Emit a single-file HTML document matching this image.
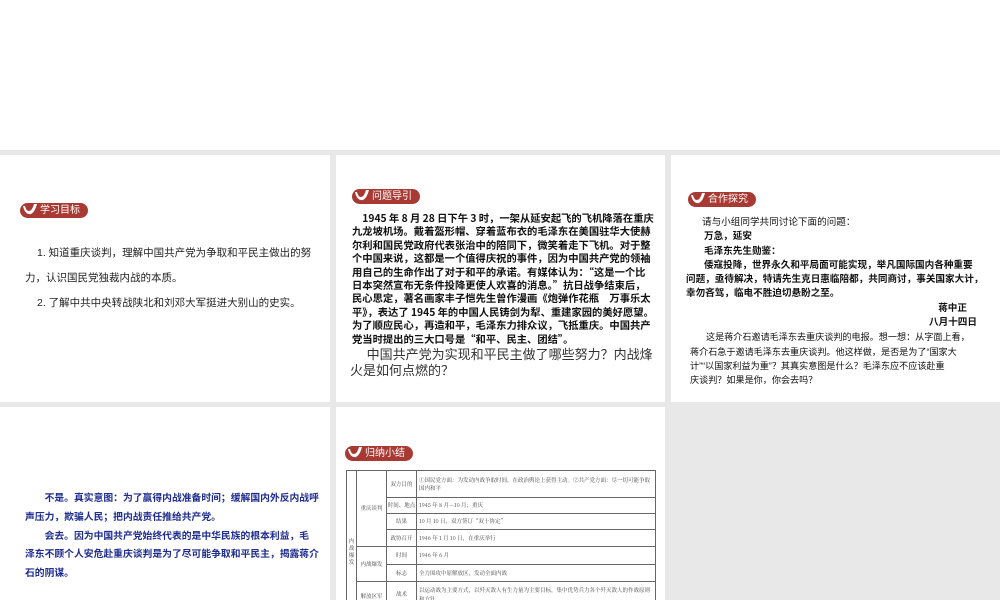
<!DOCTYPE html><html><head><meta charset="utf-8"><style>
html,body{margin:0;width:1000px;height:600px;overflow:hidden}
body{background:#e8e8e8;position:relative;font-family:"Liberation Sans","Noto Sans CJK SC",sans-serif;color:#222}
.p{position:absolute;background:#fff;overflow:hidden}
.b{position:absolute;height:15px;width:68px}
.b .pill{position:absolute;left:0;top:0;width:68px;height:15px;border-radius:8px;background:#a93a33}
.b span{position:absolute;left:20px;top:1px;color:#fff;font-size:10px;line-height:13px}
.t{position:absolute;font-size:10.5px;white-space:nowrap}
.l{white-space:nowrap}
table{border-collapse:collapse;font-family:"Noto Serif CJK SC",serif;font-size:5.5px;color:#444;table-layout:fixed}
td{border:1px solid #666;padding:0 2px;line-height:8.5px;text-align:left;overflow:hidden}
td.c{text-align:center;padding:0 1px}
</style></head><body>
<div class="p" style="left:0;top:0;width:1000px;height:150px"></div>
<div class="p" style="left:0;top:155px;width:330px;height:247px"></div>
<div class="p" style="left:336px;top:155px;width:329px;height:247px"></div>
<div class="p" style="left:671px;top:155px;width:329px;height:247px"></div>
<div class="p" style="left:0;top:407px;width:330px;height:193px"></div>

<svg width="0" height="0" style="position:absolute"><defs><g id="sw"><path d="M3 3 Q5 12 11 11 Q15 9 17 1 L14 1 Q12 8 9 8 Q6 8 5 3Z" fill="#fff"/></g></defs></svg>

<div class="b" style="left:20px;top:203px"><div class="pill"></div><svg style="position:absolute;left:0;top:0" width="20" height="15"><use href="#sw"/></svg><span>学习目标</span></div>
<div class="t" style="left:37px;top:245px">1. 知道重庆谈判，理解中国共产党为争取和平民主做出的努</div>
<div class="t" style="left:25px;top:270px">力，认识国民党独裁内战的本质。</div>
<div class="t" style="left:37px;top:295px">2. 了解中共中央转战陕北和刘邓大军挺进大别山的史实。</div>

<div class="b" style="left:352px;top:189px"><div class="pill"></div><svg style="position:absolute;left:0;top:0" width="20" height="15"><use href="#sw"/></svg><span>问题导引</span></div>
<div style="position:absolute;left:352px;top:211px;width:305px;font-size:10.3px;line-height:13.4px;font-weight:bold;color:#111;font-family:'Noto Sans CJK SC',sans-serif">
<div class="l">　1945 年 8 月 28 日下午 3 时，一架从延安起飞的飞机降落在重庆</div>
<div class="l">九龙坡机场。戴着盔形帽、穿着蓝布衣的毛泽东在美国驻华大使赫</div>
<div class="l">尔利和国民党政府代表张治中的陪同下，微笑着走下飞机。对于整</div>
<div class="l">个中国来说，这都是一个值得庆祝的事件，因为中国共产党的领袖</div>
<div class="l">用自己的生命作出了对于和平的承诺。有媒体认为：“这是一个比</div>
<div class="l">日本突然宣布无条件投降更使人欢喜的消息。”抗日战争结束后，</div>
<div class="l">民心思定，著名画家丰子恺先生曾作漫画《炮弹作花瓶　万事乐太</div>
<div class="l">平》，表达了 1945 年的中国人民铸剑为犁、重建家园的美好愿望。</div>
<div class="l">为了顺应民心，再造和平，毛泽东力排众议，飞抵重庆。中国共产</div>
<div class="l">党当时提出的三大口号是“和平、民主、团结”。</div></div>
<div style="position:absolute;left:350px;top:347px;width:310px;font-size:13px;line-height:16px;color:#333">
<div class="l">　 中国共产党为实现和平民主做了哪些努力？内战烽</div><div class="l">火是如何点燃的？</div></div>

<div class="b" style="left:688px;top:192px"><div class="pill"></div><svg style="position:absolute;left:0;top:0" width="20" height="15"><use href="#sw"/></svg><span>合作探究</span></div>
<div style="position:absolute;left:686px;top:216px;width:305px;font-size:9.6px;line-height:14.3px;color:#111">
<div class="l" style="padding-left:16px">请与小组同学共同讨论下面的问题：</div>
<div style="font-weight:bold">
<div class="l" style="padding-left:18px">万急，延安</div>
<div class="l" style="padding-left:18px">毛泽东先生勋鉴：</div>
<div class="l" style="padding-left:18px">倭寇投降，世界永久和平局面可能实现，举凡国际国内各种重要</div>
<div class="l">问题，亟待解决，特请先生克日惠临陪都，共同商讨，事关国家大计，</div>
<div class="l">幸勿吝驾，临电不胜迫切悬盼之至。</div>
<div class="l" style="text-align:right;padding-right:24px">蒋中正</div>
<div class="l" style="text-align:right;padding-right:14px">八月十四日</div></div>
<div style="font-size:9.1px">
<div class="l" style="padding-left:20px">这是蒋介石邀请毛泽东去重庆谈判的电报。想一想：从字面上看，</div>
<div class="l" style="padding-left:4px">蒋介石急于邀请毛泽东去重庆谈判。他这样做，是否是为了“国家大</div>
<div class="l" style="padding-left:4px">计”“以国家利益为重”？其真实意图是什么？毛泽东应不应该赴重</div>
<div class="l" style="padding-left:4px">庆谈判？如果是你，你会去吗？</div></div></div>

<div style="position:absolute;left:25px;top:490px;width:300px;font-size:9.8px;line-height:18.8px;color:#1f2d8f;font-weight:bold">
<div class="l">　　不是。真实意图：为了赢得内战准备时间；缓解国内外反内战呼</div>
<div class="l">声压力，欺骗人民；把内战责任推给共产党。</div>
<div class="l">　　会去。因为中国共产党始终代表的是中华民族的根本利益，毛</div>
<div class="l">泽东不顾个人安危赴重庆谈判是为了尽可能争取和平民主，揭露蒋介</div>
<div class="l">石的阴谋。</div></div>

<div class="p" style="left:336px;top:407px;width:329px;height:193px">
<div class="b" style="left:9px;top:39px"><div class="pill"></div><svg style="position:absolute;left:0;top:0" width="20" height="15"><use href="#sw"/></svg><span>归纳小结</span></div>
<table style="position:absolute;left:10px;top:63px;width:310px">
<col style="width:10px"><col style="width:30px"><col style="width:30px"><col>
<tr style="height:27px"><td rowspan="8" class="c" style="padding:0;line-height:7px;vertical-align:middle">内<br>战<br>爆<br>发</td><td rowspan="4" class="c">重庆谈判</td><td class="c">双方目的</td><td>①国民党方面：为发动内战争取时间，在政治舆论上获得主动。②共产党方面：尽一切可能争取国内和平</td></tr>
<tr style="height:16px"><td class="c" style="white-space:nowrap;padding:0">时间、地点</td><td>1945 年 8 月—10 月；重庆</td></tr>
<tr style="height:16px"><td class="c">结果</td><td>10 月 10 日，双方签订“双十协定”</td></tr>
<tr style="height:17px"><td class="c">政协召开</td><td>1946 年 1 月 10 日，在重庆举行</td></tr>
<tr style="height:18px"><td rowspan="2" class="c">内战爆发</td><td class="c">时间</td><td>1946 年 6 月</td></tr>
<tr style="height:17px"><td class="c">标志</td><td>全力围攻中原解放区，发动全面内战</td></tr>
<tr style="height:26px"><td rowspan="2" class="c" style="line-height:12px">解放区军民的自卫反击</td><td class="c">战术</td><td>以运动战为主要方式，以歼灭敌人有生力量为主要目标，集中优势兵力各个歼灭敌人的作战原则和方针</td></tr>
<tr style="height:26px"><td class="c">粉碎重点进攻</td><td>先后取得青化砭、沙家店等战役的胜利，粉碎了国民党军队对陕北的重点进攻；华东野战军取得孟良崮战役胜利，打退了敌人对山东解放区的重点进攻</td></tr>
</table></div>
</body></html>
